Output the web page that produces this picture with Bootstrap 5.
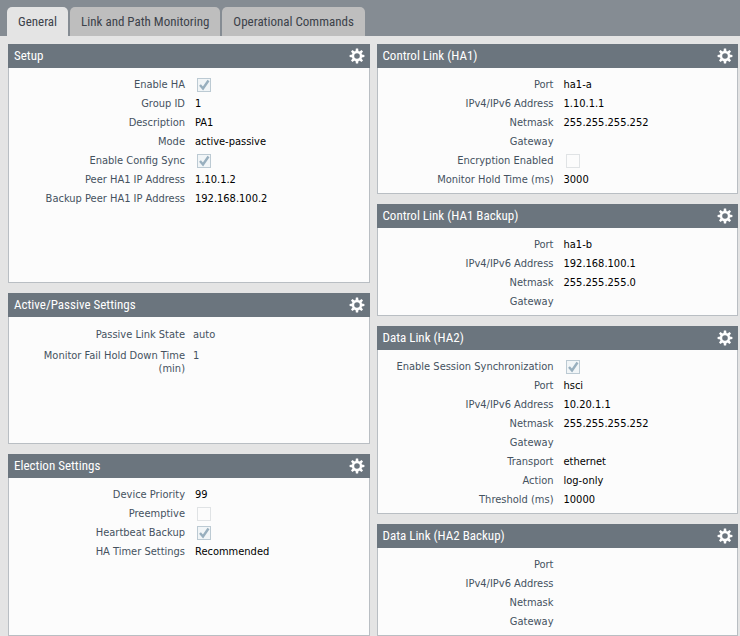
<!DOCTYPE html>
<html lang="en">
<head>
<meta charset="utf-8">
<meta name="viewport" content="width=device-width, initial-scale=1">
<title>High Availability</title>
<link rel="stylesheet" href="https://cdn.jsdelivr.net/npm/bootstrap@5.3.0/dist/css/bootstrap.min.css">
<style>
  body { background: #e4e4e4; color: #000; font: 11px/19px "DejaVu Sans Condensed", "DejaVu Sans", sans-serif; }
  .tab-strip { background: #858c93; padding: 7px 7px 0; gap: 2px; border: 0; }
  .tab-strip .nav-link { margin: 0; border: 0; border-radius: 5px 5px 0 0; padding: 5px 11px 4px; background: #bebebe; color: #3c424a; font: 13px/20px "Roboto Condensed", Roboto, sans-serif; }
  .tab-strip .nav-link.active { background: #e4e4e4; color: #3c424a; }
  .board { padding: 8px 2px 0 8px; gap: 7px; }
  .board-col { gap: 10px; flex: 1 1 0; min-width: 0; }
  .panel-head { background: #6b757e; color: #fff; height: 24px; padding: 0 5px 0 6px; }
  .panel-head h2 { margin: 0; font: 13px/24px "Roboto Condensed", Roboto, sans-serif; }
  .gear { border: 0; background: none; padding: 0; color: #fff; line-height: 0; }
  .panel-body { background: #fcfcfc; border: 1px solid #b9bec3; border-top: 0; padding: 7px 0 4px; }
  .panel-tall { min-height: 215px; }
  .panel-mid { min-height: 127px; }
  .field { gap: 10px; min-height: 19px; }
  .field-name { width: 176px; text-align: right; color: #45525f; flex: none; }
  .field-tick { appearance: none; width: 14px; height: 14px; margin: 3px 0 0 2px; border: 1px solid #e0e3e5; background: #fcfcfc center/12px 12px no-repeat; }
  .field-tick:checked { border-color: #bccad3; background-color: #f1f5f7; background-image: url("data:image/svg+xml,%3Csvg xmlns='http://www.w3.org/2000/svg' viewBox='0 0 12 12'%3E%3Cpath d='M2 6 L5 9.5 L10.5 1.5' fill='none' stroke='%2398afbe' stroke-width='2.4'/%3E%3C/svg%3E"); }
  .fields-loose { padding-top: 11px; line-height: 13px; color: #45525f; }
  .fields-loose .field { gap: 8px; min-height: 0; margin-bottom: 8px; }
  .fields-loose .field-name { padding-left: 20px; }
</style>
<script src="https://cdn.jsdelivr.net/npm/bootstrap@5.3.0/dist/js/bootstrap.bundle.min.js"></script>
</head>
<body class="min-vh-100 d-flex flex-column">
<svg class="d-none" aria-hidden="true">
  <symbol id="gear" viewBox="-8 -8 16 16">
    <circle r="4" fill="none" stroke="currentColor" stroke-width="2.4"/>
    <g fill="currentColor">
      <path id="tooth" d="M-1.5 -4.6 L-1.1 -7.4 H1.1 L1.5 -4.6Z"/>
      <use href="#tooth" transform="rotate(45)"/><use href="#tooth" transform="rotate(90)"/><use href="#tooth" transform="rotate(135)"/>
      <use href="#tooth" transform="rotate(180)"/><use href="#tooth" transform="rotate(225)"/><use href="#tooth" transform="rotate(270)"/><use href="#tooth" transform="rotate(315)"/>
    </g>
  </symbol>
</svg>
<ul class="nav nav-tabs tab-strip" role="tablist">
  <li class="nav-item" role="presentation"><button type="button" class="nav-link active" role="tab" aria-selected="true">General</button></li>
  <li class="nav-item" role="presentation"><button type="button" class="nav-link" role="tab" aria-selected="false">Link and Path Monitoring</button></li>
  <li class="nav-item" role="presentation"><button type="button" class="nav-link" role="tab" aria-selected="false">Operational Commands</button></li>
</ul>
<main class="board d-flex flex-grow-1">
  <div class="board-col d-flex flex-column">
    <section>
      <header class="panel-head d-flex align-items-center justify-content-between"><h2>Setup</h2><button type="button" class="gear" aria-label="Edit Setup"><svg width="16" height="16"><use href="#gear"/></svg></button></header>
      <div class="panel-body panel-tall">
        <div class="field d-flex"><label class="field-name" for="enable-ha">Enable HA</label><input class="field-tick" type="checkbox" id="enable-ha" checked disabled></div>
        <div class="field d-flex"><span class="field-name">Group ID</span><span>1</span></div>
        <div class="field d-flex"><span class="field-name">Description</span><span>PA1</span></div>
        <div class="field d-flex"><span class="field-name">Mode</span><span>active-passive</span></div>
        <div class="field d-flex"><label class="field-name" for="config-sync">Enable Config Sync</label><input class="field-tick" type="checkbox" id="config-sync" checked disabled></div>
        <div class="field d-flex"><span class="field-name">Peer HA1 IP Address</span><span>1.10.1.2</span></div>
        <div class="field d-flex"><span class="field-name">Backup Peer HA1 IP Address</span><span>192.168.100.2</span></div>
      </div>
    </section>
    <section>
      <header class="panel-head d-flex align-items-center justify-content-between"><h2>Active/Passive Settings</h2><button type="button" class="gear" aria-label="Edit Active/Passive Settings"><svg width="16" height="16"><use href="#gear"/></svg></button></header>
      <div class="panel-body panel-mid fields-loose">
        <div class="field d-flex"><span class="field-name">Passive Link State</span><span>auto</span></div>
        <div class="field d-flex"><span class="field-name">Monitor Fail Hold Down Time (min)</span><span>1</span></div>
      </div>
    </section>
    <section class="d-flex flex-column flex-grow-1">
      <header class="panel-head d-flex align-items-center justify-content-between"><h2>Election Settings</h2><button type="button" class="gear" aria-label="Edit Election Settings"><svg width="16" height="16"><use href="#gear"/></svg></button></header>
      <div class="panel-body flex-grow-1">
        <div class="field d-flex"><span class="field-name">Device Priority</span><span>99</span></div>
        <div class="field d-flex"><label class="field-name" for="preemptive">Preemptive</label><input class="field-tick" type="checkbox" id="preemptive" disabled></div>
        <div class="field d-flex"><label class="field-name" for="heartbeat">Heartbeat Backup</label><input class="field-tick" type="checkbox" id="heartbeat" checked disabled></div>
        <div class="field d-flex"><span class="field-name">HA Timer Settings</span><span>Recommended</span></div>
      </div>
    </section>
  </div>
  <div class="board-col d-flex flex-column">
    <section>
      <header class="panel-head d-flex align-items-center justify-content-between"><h2>Control Link (HA1)</h2><button type="button" class="gear" aria-label="Edit Control Link (HA1)"><svg width="16" height="16"><use href="#gear"/></svg></button></header>
      <div class="panel-body">
        <div class="field d-flex"><span class="field-name">Port</span><span>ha1-a</span></div>
        <div class="field d-flex"><span class="field-name">IPv4/IPv6 Address</span><span>1.10.1.1</span></div>
        <div class="field d-flex"><span class="field-name">Netmask</span><span>255.255.255.252</span></div>
        <div class="field d-flex"><span class="field-name">Gateway</span></div>
        <div class="field d-flex"><label class="field-name" for="encryption">Encryption Enabled</label><input class="field-tick" type="checkbox" id="encryption" disabled></div>
        <div class="field d-flex"><span class="field-name">Monitor Hold Time (ms)</span><span>3000</span></div>
      </div>
    </section>
    <section>
      <header class="panel-head d-flex align-items-center justify-content-between"><h2>Control Link (HA1 Backup)</h2><button type="button" class="gear" aria-label="Edit Control Link (HA1 Backup)"><svg width="16" height="16"><use href="#gear"/></svg></button></header>
      <div class="panel-body">
        <div class="field d-flex"><span class="field-name">Port</span><span>ha1-b</span></div>
        <div class="field d-flex"><span class="field-name">IPv4/IPv6 Address</span><span>192.168.100.1</span></div>
        <div class="field d-flex"><span class="field-name">Netmask</span><span>255.255.255.0</span></div>
        <div class="field d-flex"><span class="field-name">Gateway</span></div>
      </div>
    </section>
    <section>
      <header class="panel-head d-flex align-items-center justify-content-between"><h2>Data Link (HA2)</h2><button type="button" class="gear" aria-label="Edit Data Link (HA2)"><svg width="16" height="16"><use href="#gear"/></svg></button></header>
      <div class="panel-body">
        <div class="field d-flex"><label class="field-name" for="session-sync">Enable Session Synchronization</label><input class="field-tick" type="checkbox" id="session-sync" checked disabled></div>
        <div class="field d-flex"><span class="field-name">Port</span><span>hsci</span></div>
        <div class="field d-flex"><span class="field-name">IPv4/IPv6 Address</span><span>10.20.1.1</span></div>
        <div class="field d-flex"><span class="field-name">Netmask</span><span>255.255.255.252</span></div>
        <div class="field d-flex"><span class="field-name">Gateway</span></div>
        <div class="field d-flex"><span class="field-name">Transport</span><span>ethernet</span></div>
        <div class="field d-flex"><span class="field-name">Action</span><span>log-only</span></div>
        <div class="field d-flex"><span class="field-name">Threshold (ms)</span><span>10000</span></div>
      </div>
    </section>
    <section>
      <header class="panel-head d-flex align-items-center justify-content-between"><h2>Data Link (HA2 Backup)</h2><button type="button" class="gear" aria-label="Edit Data Link (HA2 Backup)"><svg width="16" height="16"><use href="#gear"/></svg></button></header>
      <div class="panel-body">
        <div class="field d-flex"><span class="field-name">Port</span></div>
        <div class="field d-flex"><span class="field-name">IPv4/IPv6 Address</span></div>
        <div class="field d-flex"><span class="field-name">Netmask</span></div>
        <div class="field d-flex"><span class="field-name">Gateway</span></div>
      </div>
    </section>
  </div>
</main>
</body>
</html>
